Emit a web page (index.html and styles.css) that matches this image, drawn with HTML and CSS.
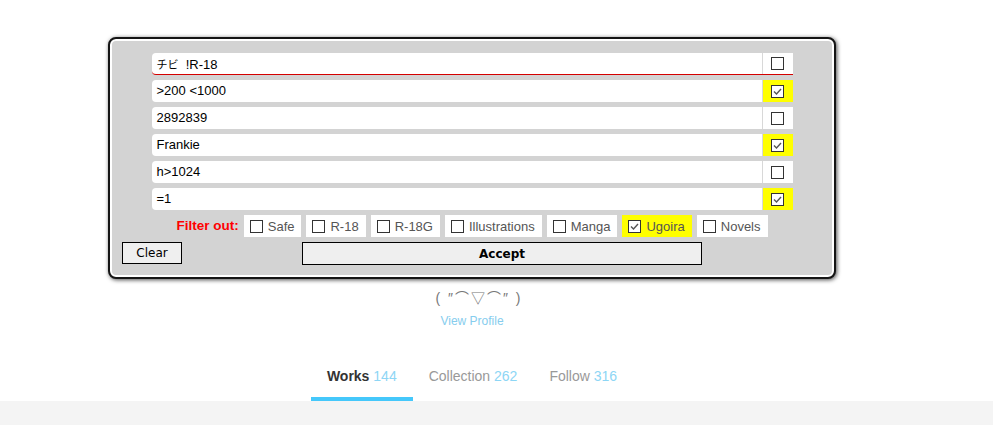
FILE: index.html
```html
<!DOCTYPE html>
<html lang="en">
<head>
  <meta charset="UTF-8">
  <title>Search Filters</title>
  <link rel="stylesheet" href="styles.css">
</head>
<body>
  <div class="page">
    <div class="panel">
      <div class="rows">
        <div class="row row-active">
          <span class="query"><span class="kana">チビ</span>&nbsp; !R-18</span>
          <span class="cell"><svg class="box" viewBox="0 0 13 13"><rect x="0.5" y="0.5" width="12" height="12"/></svg></span>
        </div>
        <div class="row">
          <span class="query">&gt;200 &lt;1000</span>
          <span class="cell on"><svg class="box" viewBox="0 0 13 13"><rect x="0.5" y="0.5" width="12" height="12"/><polyline points="3,6.5 5.5,9 10,4"/></svg></span>
        </div>
        <div class="row">
          <span class="query">2892839</span>
          <span class="cell"><svg class="box" viewBox="0 0 13 13"><rect x="0.5" y="0.5" width="12" height="12"/></svg></span>
        </div>
        <div class="row">
          <span class="query">Frankie</span>
          <span class="cell on"><svg class="box" viewBox="0 0 13 13"><rect x="0.5" y="0.5" width="12" height="12"/><polyline points="3,6.5 5.5,9 10,4"/></svg></span>
        </div>
        <div class="row">
          <span class="query">h&gt;1024</span>
          <span class="cell"><svg class="box" viewBox="0 0 13 13"><rect x="0.5" y="0.5" width="12" height="12"/></svg></span>
        </div>
        <div class="row">
          <span class="query">=1</span>
          <span class="cell on"><svg class="box" viewBox="0 0 13 13"><rect x="0.5" y="0.5" width="12" height="12"/><polyline points="3,6.5 5.5,9 10,4"/></svg></span>
        </div>
      </div>

      <div class="filters">
        <span class="filter-label">Filter out:</span>
        <span class="chip"><svg class="box" viewBox="0 0 13 13"><rect x="0.5" y="0.5" width="12" height="12"/></svg>Safe</span>
        <span class="chip"><svg class="box" viewBox="0 0 13 13"><rect x="0.5" y="0.5" width="12" height="12"/></svg>R-18</span>
        <span class="chip"><svg class="box" viewBox="0 0 13 13"><rect x="0.5" y="0.5" width="12" height="12"/></svg>R-18G</span>
        <span class="chip"><svg class="box" viewBox="0 0 13 13"><rect x="0.5" y="0.5" width="12" height="12"/></svg>Illustrations</span>
        <span class="chip"><svg class="box" viewBox="0 0 13 13"><rect x="0.5" y="0.5" width="12" height="12"/></svg>Manga</span>
        <span class="chip on"><svg class="box" viewBox="0 0 13 13"><rect x="0.5" y="0.5" width="12" height="12"/><polyline points="3,6.5 5.5,9 10,4"/></svg>Ugoira</span>
        <span class="chip"><svg class="box" viewBox="0 0 13 13"><rect x="0.5" y="0.5" width="12" height="12"/></svg>Novels</span>
      </div>

      <div class="actions">
        <button class="btn clear">Clear</button>
        <button class="btn accept">Accept</button>
      </div>
    </div>

    <div class="profile">
      <div class="kaomoji">( ″⌒▽⌒″ )</div>
      <a class="view-profile" href="#">View Profile</a>
    </div>

    <nav class="tabs">
      <a class="tab active" href="#">Works <span class="count">144</span></a>
      <a class="tab" href="#">Collection <span class="count">262</span></a>
      <a class="tab" href="#">Follow <span class="count">316</span></a>
    </nav>
  </div>
  <div class="feed"></div>
</body>
</html>
```

FILE: styles.css
```css
* {
  box-sizing: border-box;
  margin: 0;
  padding: 0;
}

body {
  font-family: "Liberation Sans", Arial, sans-serif;
  background: #fff;
  overflow: hidden;
}

.page {
  width: 944px;
  padding-top: 37px;
}

/* search filter panel */
.panel {
  width: 728px;
  margin: 0 auto;
  background: #d3d3d3;
  border: 2px solid #151515;
  border-radius: 8px;
  box-shadow: inset 0 0 0 2px #fff, 1px 1px 4px rgba(0, 0, 0, 0.7);
  padding: 14px 12px 12px;
}

.rows {
  width: 641px;
  margin: 0 auto;
  display: flex;
  flex-direction: column;
  gap: 5px;
}

.row {
  display: flex;
  height: 22px;
  background: #fff;
  border-radius: 4px 0 0 4px;
}

.row-active {
  border-bottom: 1px solid #d40000;
}

.query {
  flex: 1;
  padding-left: 5px;
  font-size: 13px;
  line-height: 22px;
  color: #000;
  border-right: 1px solid #d8d8d8;
}

.kana {
  font-family: "Noto Sans CJK JP", sans-serif;
  font-size: 11px;
}

.cell {
  width: 30px;
  display: flex;
  align-items: center;
  justify-content: center;
  background: #fff;
}

.cell.on {
  background: #ffff00;
}

.box {
  width: 13px;
  height: 13px;
  flex-shrink: 0;
}

.box rect {
  fill: #fff;
  stroke: #333;
  stroke-width: 1;
}

.box polyline {
  fill: none;
  stroke: #555;
  stroke-width: 1.4;
}

/* content type toggles */
.filters {
  display: flex;
  justify-content: center;
  gap: 5px;
  margin-top: 5px;
  height: 22px;
}

.filter-label {
  color: #f00;
  font-weight: bold;
  font-size: 13.5px;
  line-height: 22px;
}

.chip {
  display: flex;
  align-items: center;
  gap: 5px;
  padding: 0 7px 0 6px;
  background: #fff;
  color: #555;
  font-size: 13px;
}

.chip.on {
  background: #ffff00;
}

.actions {
  display: flex;
  margin-top: 5px;
}

.btn {
  height: 22px;
  background: #efefef;
  border: 1px solid #000;
  font-family: "DejaVu Sans", Tahoma, sans-serif;
  font-size: 12px;
  color: #000;
}

.clear {
  width: 60px;
}

.accept {
  width: 400px;
  height: 23px;
  margin: 0 auto;
  font-weight: bold;
}

/* profile summary */
.profile {
  margin-top: 10px;
  text-align: center;
}

.kaomoji {
  font-size: 14px;
  line-height: 18px;
  color: #777;
  letter-spacing: 2px;
  padding-left: 14px;
  font-family: "Liberation Sans", "Noto Sans CJK JP", sans-serif;
}

.view-profile {
  display: inline-block;
  margin-top: 6px;
  font-size: 12px;
  line-height: 16px;
  color: #86cdee;
  text-decoration: none;
}

.tabs {
  display: flex;
  justify-content: center;
  margin-top: 22px;
}

.tab {
  padding: 15px 16px 11px;
  font-size: 14px;
  line-height: 20px;
  color: #999;
  text-decoration: none;
  border-bottom: 4px solid transparent;
}

.tab.active {
  color: #333;
  font-weight: bold;
  border-bottom-color: #45c8fb;
}

.count {
  color: #8dd6f5;
  font-weight: normal;
}

.feed {
  height: 40px;
  background: #f4f4f4;
}
```
